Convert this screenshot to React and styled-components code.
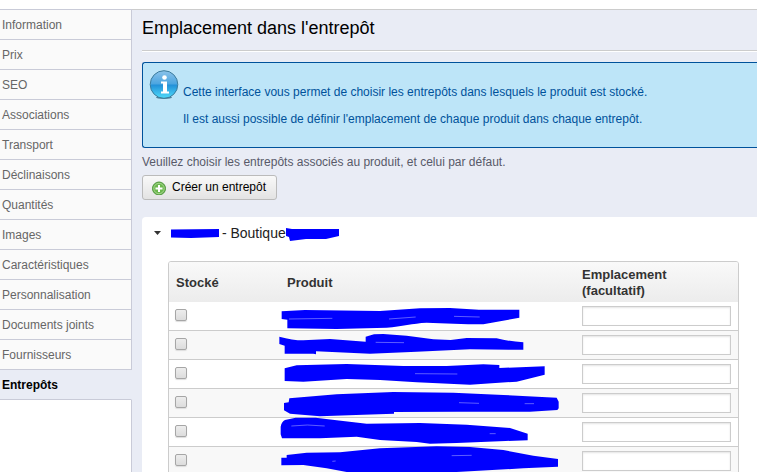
import styled, { createGlobalStyle } from "styled-components";

const GlobalStyle = createGlobalStyle`
  * {
    box-sizing: border-box;
  }

  body {
    margin: 0;
    overflow: hidden;
    background: #fff;
    color: #585a69;
    font-family: "Liberation Sans", Arial, sans-serif;
    font-size: 12px;
  }
`;

const Page = styled.div`
  display: flex;
  min-height: 100vh;
  padding-top: 9px;
`;

const Sidebar = styled.nav`
  display: flex;
  flex-direction: column;
  flex: 0 0 132px;
  border-top: 1px solid #c9cbd8;
`;

const Tab = styled.a`
  height: 30px;
  padding: 1px 0 0 2px;
  line-height: 29px;
  font-size: 12px;
  text-decoration: none;
  white-space: nowrap;
  color: ${(props) => (props.$active ? "#000" : "#666")};
  font-weight: ${(props) => (props.$active ? "bold" : "normal")};
  background: ${(props) => (props.$active ? "#e9ecf5" : "#fafafa")};
  border-bottom: 1px solid #c9cbd8;
  border-right: 1px solid ${(props) => (props.$active ? "#e9ecf5" : "#c9cbd8")};
`;

const SidebarRest = styled.div`
  flex: 1;
  border-right: 1px solid #c9cbd8;
`;

const Main = styled.main`
  flex: 1;
  min-width: 0;
  padding-left: 10px;
  background: #e9ecf5;
  border-top: 1px solid #ccc;
`;

const Title = styled.h1`
  margin: 0 0 11px;
  padding: 8px 0 12px;
  color: #000;
  font-size: 18px;
  font-weight: normal;
  line-height: 20px;
  border-bottom: 1px solid #ccc;
  box-shadow: 0 1px #fff;
`;

const Info = styled.div`
  display: flex;
  gap: 4px;
  padding: 7px 0 20px 6px;
  color: #00529b;
  background: #bde5f8;
  border: 1px solid #00529b;
  border-right: none;
  border-radius: 3px 0 0 3px;
`;

const InfoText = styled.div`
  display: flex;
  flex-direction: column;
  gap: 11px;
  padding-top: 14px;

  p {
    margin: 0;
    line-height: 16px;
  }
`;

const Hint = styled.p`
  margin: 6px 0 5px;
  line-height: 16px;
`;

const CreateButton = styled.button`
  display: flex;
  align-items: center;
  gap: 5px;
  height: 25px;
  padding: 0 10px 2px 8px;
  color: #000;
  font-family: inherit;
  font-size: 12px;
  background: linear-gradient(#f9f9f9, #e3e3e3);
  border: 1px solid #bbb;
  border-radius: 3px;
`;

const Panel = styled.section`
  margin-top: 17px;
  padding: 7px 18px 0 26px;
  background: #fff;
  border-radius: 4px 0 0 0;
`;

const PanelTitle = styled.h2`
  display: flex;
  align-items: center;
  margin: 0 0 19px -14px;
  color: #222;
  font-size: 14px;
  font-weight: normal;
  line-height: 18px;
  white-space: pre;
`;

const TableFrame = styled.div`
  border: 1px solid #ccc;
  border-radius: 3px;
  overflow: hidden;
`;

const Table = styled.table`
  width: 100%;
  table-layout: fixed;
  border-collapse: separate;
  border-spacing: 0;
`;

const HeadRow = styled.tr`
  background: linear-gradient(#f9f9f9, #ececec);
`;

const Th = styled.th`
  width: ${(props) => props.$width || "auto"};
  height: 40px;
  padding: 2px 7px 0;
  color: #333;
  font-size: 13px;
  line-height: 16px;
  text-align: left;
`;

const Row = styled.tr`
  background: #fff;

  &:nth-child(even) {
    background: #f8f8f8;
  }
`;

const Td = styled.td`
  height: 29px;
  padding: 0 7px;
  vertical-align: middle;
  border-bottom: 1px solid #ccc;
`;

const ProductCell = styled(Td)`
  padding: 0;
`;

const Checkbox = styled.input`
  display: block;
  appearance: none;
  width: 12px;
  height: 12px;
  margin: 0 0 2px -1px;
  background: linear-gradient(#ededed, #dcdcdc);
  border: 1px solid #a6a6a6;
  border-radius: 2px;
  box-shadow: 0 1px 1px #ddd;
`;

const LocationInput = styled.input`
  display: block;
  width: 100%;
  height: 20px;
  padding: 0 4px;
  font-family: inherit;
  font-size: 12px;
  background: #fff;
  border: 1px solid #ccc;
  box-shadow: inset 0 1px 2px #e4e4e4;
`;

const Scribble = styled.svg`
  display: block;
  overflow: visible;
  fill: #00f;
`;

const tabs = [
  "Information",
  "Prix",
  "SEO",
  "Associations",
  "Transport",
  "Déclinaisons",
  "Quantités",
  "Images",
  "Caractéristiques",
  "Personnalisation",
  "Documents joints",
  "Fournisseurs",
  "Entrepôts",
];

// masked product names: outline of the marker, then the gaps it left
const products = [
  {
    mark: "M8 28L78 24L303 27L423 19L513 18L600 23L721 23V47L613 67Q520 66 443 62C400 64 370 73 323 77L173 81L25 79V53L8 51Z",
    gaps: "M30 51L160 49M330 51L410 45M525 43L602 45",
  },
  {
    mark: "M1 17Q40 28 73 28L153 24L260 32V17L285 10L313 9L383 14L463 25L515 27L563 21L653 22Q690 31 733 34V56H690L573 55L413 62L273 68L111 61V70L103 68H17V44L1 39Z",
    gaps: "M290 34L375 35",
  },
  {
    mark: "M17 25L53 16L203 12L373 18H503L613 13L661 15V24L797 19V44L713 65L573 74L413 67L303 60L203 57L73 65L17 63Z",
    gaps: "M408 41L535 42",
  },
  {
    mark: "M31 28L173 16L343 9L523 11L673 18L833 26L839 38V58L835 63L753 68L533 68L345 69V74L253 77L123 82L33 74L15 64V42L29 40Z",
    gaps: "M540 41L600 43M737 44L765 44",
  },
  {
    mark: "M5 26Q8 11 18 6L50 -1H110L173 7L263 17L423 15L563 20L693 30L746 47V67L680 69L533 75L453 77L413 72L303 66L233 56L123 61H9L5 49Z",
    gaps: "M37 24L85 21L137 24M632 47L650 47",
  },
  {
    mark: "M7 32H23V24L83 17L183 16L303 4L473 -2L573 0L673 9L763 26L837 36V59L733 64L533 75H203L143 64L73 54L7 55Z",
    gaps: "M518 26L578 25M160 43L170 42",
  },
];

function InfoIcon() {
  return (
    <svg width="30" height="30" viewBox="0 0 30 30" aria-hidden="true">
      <defs>
        <linearGradient id="info" x1="0" y1="0" x2="0" y2="1">
          <stop offset="0" stopColor="#8cc3ea" />
          <stop offset="0.48" stopColor="#4ba5e0" />
          <stop offset="0.52" stopColor="#2290d8" />
          <stop offset="1" stopColor="#4fdcfa" />
        </linearGradient>
      </defs>
      <ellipse cx="15" cy="27.500" rx="8" ry="1.500" fill="#4a8299" />
      <circle cx="15" cy="14.500" r="13.800" fill="url(#info)" stroke="#3b7b9c" />
      <circle cx="15.500" cy="7.500" r="2.300" fill="#fff" />
      <path d="M12 11.500h6v10h2v2h-8v-2h2v-8h-2z" fill="#fff" />
    </svg>
  );
}

function AddIcon() {
  return (
    <svg width="16" height="16" viewBox="0 0 16 16" aria-hidden="true">
      <circle cx="8" cy="9.500" r="6.500" fill="#6cb84e" stroke="#4e963b" />
      <circle cx="8" cy="9.500" r="5.200" fill="none" stroke="#a5d48e" />
      <path d="M8 6v7M4.500 9.500h7" stroke="#fff" strokeWidth="2" />
    </svg>
  );
}

export default function App() {
  return (
    <>
      <GlobalStyle />
      <Page>
        <Sidebar>
          {tabs.map((tab) => (
            <Tab key={tab} href="#" $active={tab === "Entrepôts"}>
              {tab}
            </Tab>
          ))}
          <SidebarRest />
        </Sidebar>

        <Main>
          <Title>Emplacement dans l'entrepôt</Title>
          <Info>
            <InfoIcon />
            <InfoText>
              <p>
                Cette interface vous permet de choisir les entrepôts dans
                lesquels le produit est stocké.
              </p>
              <p>
                Il est aussi possible de définir l'emplacement de chaque produit
                dans chaque entrepôt.
              </p>
            </InfoText>
          </Info>
          <Hint>
            Veuillez choisir les entrepôts associés au produit, et celui par
            défaut.
          </Hint>
          <CreateButton type="button">
            <AddIcon />
            Créer un entrepôt
          </CreateButton>

          <Panel>
            <PanelTitle>
              <svg width="17" height="18" aria-hidden="true">
                <path d="M0 7h7l-3.500 4z" fill="#333" />
              </svg>
              <Scribble width="47" height="18" aria-hidden="true">
                <path d="M0 5.500L48 5V13L20 14L0 13.500Z" />
              </Scribble>
              {" - Boutique"}
              <Scribble width="54" height="18" aria-hidden="true">
                <path d="M0 4L6 5H53V12L40 15H20L4 17L3 13L0 12Z" />
              </Scribble>
            </PanelTitle>
            <TableFrame>
              <Table>
                <thead>
                  <HeadRow>
                    <Th $width="111px">Stocké</Th>
                    <Th>Produit</Th>
                    <Th $width="163px">Emplacement (facultatif)</Th>
                  </HeadRow>
                </thead>
                <tbody>
                  {products.map((product, index) => (
                    <Row key={index}>
                      <Td>
                        <Checkbox type="checkbox" aria-label="Stocké" />
                      </Td>
                      <ProductCell>
                        <Scribble
                          width="280"
                          height="28"
                          viewBox="3 0 840 84"
                          aria-hidden="true"
                        >
                          <path d={product.mark} />
                          <path
                            d={product.gaps}
                            fill="none"
                            stroke="#bbf"
                            strokeWidth="1.500"
                          />
                        </Scribble>
                      </ProductCell>
                      <Td>
                        <LocationInput type="text" aria-label="Emplacement" />
                      </Td>
                    </Row>
                  ))}
                </tbody>
              </Table>
            </TableFrame>
          </Panel>
        </Main>
      </Page>
    </>
  );
}
